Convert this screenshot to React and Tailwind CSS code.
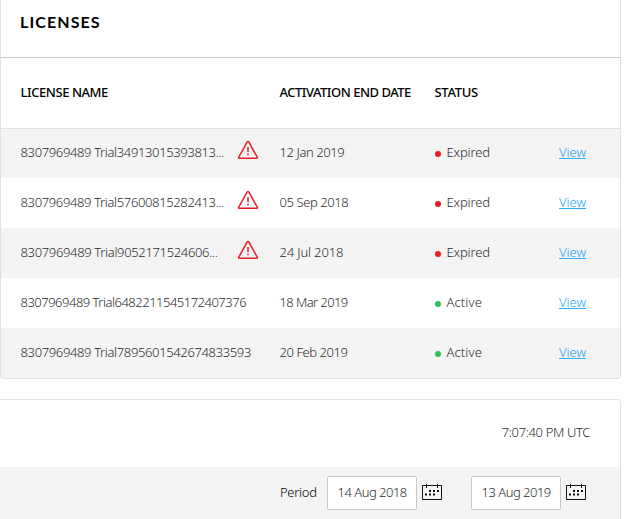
import React from "react";

const licenses = [
  { name: "8307969489 Trial34913015393813...", date: "12 Jan 2019", expired: true, tracking: "tracking-[-0.36px]", dateTracking: "tracking-[-0.4px]" },
  { name: "8307969489 Trial57600815282413...", date: "05 Sep 2018", expired: true, tracking: "tracking-[-0.36px]", dateTracking: "tracking-[-0.42px]" },
  { name: "8307969489 Trial9052171524606...", date: "24 Jul 2018", expired: true, tracking: "tracking-[-0.34px]", dateTracking: "tracking-[-0.15px]" },
  { name: "8307969489 Trial6482211545172407376", date: "18 Mar 2019", expired: false, tracking: "tracking-[-0.5px]", dateTracking: "tracking-[-0.6px]" },
  { name: "8307969489 Trial7895601542674833593", date: "20 Feb 2019", expired: false, tracking: "tracking-[-0.36px]", dateTracking: "tracking-[-0.45px]" },
];

function WarningIcon() {
  return (
    <svg width="22" height="20" viewBox="0 0 22 20" fill="none" stroke="#e61e25" strokeWidth="1.5" strokeLinejoin="round" strokeLinecap="round">
      <path d="M10.1 2.2Q11 .7 11.9 2.2L20.2 17Q20.9 18.3 19.5 18.3H2.5Q1.1 18.3 1.8 17Z" />
      <path d="M11 7V12.2" strokeLinecap="butt" />
      <path d="M11 13.7V15.3" strokeLinecap="butt" />
    </svg>
  );
}

function CalendarIcon() {
  return (
    <svg width="20" height="16" viewBox="0 0 20 16" fill="#111">
      <path d="M.5 1.5H19.5V15.5H.5Z" fill="none" stroke="#111" />
      <path d="M4 0h1v4h-1zM15 0h1v4h-1z" />
      <path d="M7 6h2v2h-2zM11 6h2v2h-2zM15 6h2v2h-2zM3 9.5h2v2h-2zM7 9.5h2v2h-2zM11 9.5h2v2h-2z" />
    </svg>
  );
}

function DateField({ value }) {
  return (
    <div className="flex items-center">
      <div className="flex h-[34px] w-[90px] items-center rounded-[2px] border border-[#c8c8c8] bg-white pb-[2px] pl-[9.5px] tracking-[-0.5px]">
        {value}
      </div>
      <div className="ml-[5px] pb-[2px]">
        <CalendarIcon />
      </div>
    </div>
  );
}

export default function App() {
  return (
    <div className="h-[519px] w-[627px] overflow-hidden bg-white font-['Noto_Sans',sans-serif] text-[13px] leading-[18px] font-light whitespace-nowrap text-[#2c2c2c]">
      <section className="h-[379px] w-[621px] overflow-hidden rounded-b-[4px] border border-t-0 border-[#e1e1e1]">
        <h2 className="flex h-[58px] items-center border-b border-[#c8c8c8] pb-[13px] pl-[19px] font-['Lato',sans-serif] text-[16px] font-bold tracking-[1.1px] text-black">
          LICENSES
        </h2>
        <div className="grid h-[71px] grid-cols-[259px_155px_1fr] items-center border-b border-[#e1e1e1] pb-[3px] pl-[19.5px] font-medium text-black">
          <div className="tracking-[-0.44px]">LICENSE NAME</div>
          <div className="tracking-[-0.49px]">ACTIVATION END DATE</div>
          <div className="tracking-[-0.3px]">STATUS</div>
        </div>
        {licenses.map((l, i) => (
          <div
            key={l.name}
            className={`grid grid-cols-[217px_42px_155px_124px_1fr] items-center pl-[19.5px] ${i === 0 ? "h-[49px] pb-[3px]" : "h-[50px] pb-[2px]"} ${i % 2 === 0 ? "bg-[#f4f4f4]" : "bg-white"}`}
          >
            <div className={l.tracking}>{l.name}</div>
            <div className="-ml-[0.5px] pb-[4px]">{l.expired && <WarningIcon />}</div>
            <div className={l.dateTracking}>{l.date}</div>
            <div className="flex items-center">
              <span className={`mt-[4px] mr-[5.5px] ml-[0.5px] h-[6px] w-[6px] rounded-full ${l.expired ? "bg-[#e61e25]" : "bg-[#35bd5d]"}`} />
              <span className={l.expired ? "tracking-[-0.15px]" : "tracking-[0.1px]"}>{l.expired ? "Expired" : "Active"}</span>
            </div>
            <a className="ml-[0.5px] w-fit text-[#1ea4fa] underline decoration-[#32acfa] decoration-1 underline-offset-1">View</a>
          </div>
        ))}
      </section>
      <section className="mt-[20px] h-[130px] w-[621px] overflow-hidden rounded-tr-[4px] border border-b-0 border-l-0 border-[#e1e1e1]">
        <div className="flex h-[67px] items-center justify-end pr-[30px] pb-[3px] tracking-[-0.36px]">7:07:40 PM UTC</div>
        <div className="flex h-[62px] items-start bg-[#f4f4f4] pt-[9px] pl-[280px]">
          <div className="flex h-[34px] w-[47px] items-center pb-[2px] font-[350] tracking-[-0.3px] text-black">Period</div>
          <DateField value="14 Aug 2018" />
          <div className="w-[29px]" />
          <DateField value="13 Aug 2019" />
        </div>
      </section>
    </div>
  );
}
